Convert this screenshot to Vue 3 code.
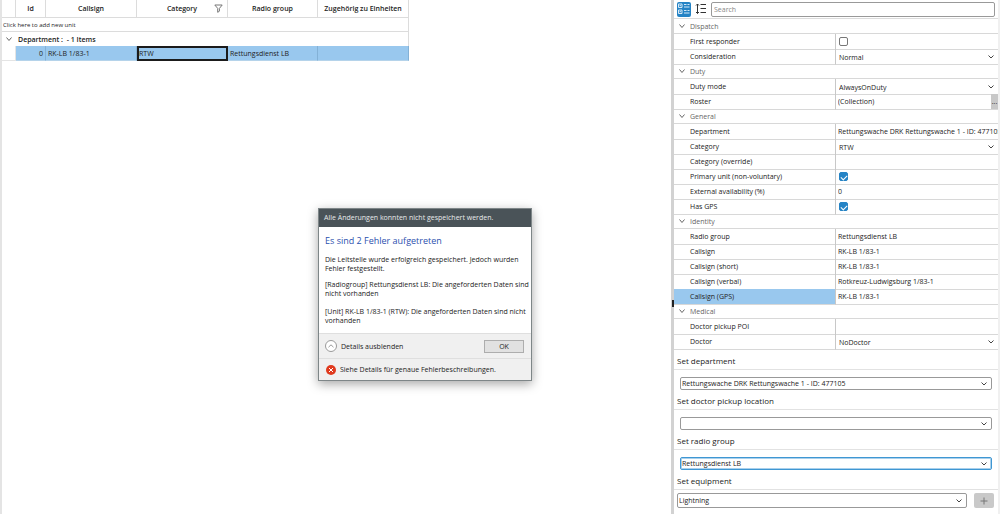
<script setup>
import { ref } from 'vue'

const columns = ['Id', 'Callsign', 'Category', 'Radio group', 'Zugehörig zu Einheiten']

const groups = ref([
  {
    name: 'Dispatch',
    rows: [
      { label: 'First responder', type: 'check', value: false },
      { label: 'Consideration', type: 'select', value: 'Normal' },
    ],
  },
  {
    name: 'Duty',
    rows: [
      { label: 'Duty mode', type: 'select', value: 'AlwaysOnDuty' },
      { label: 'Roster', type: 'collection', value: '(Collection)' },
    ],
  },
  {
    name: 'General',
    rows: [
      { label: 'Department', type: 'text', value: 'Rettungswache DRK Rettungswache 1 - ID: 477105' },
      { label: 'Category', type: 'select', value: 'RTW' },
      { label: 'Category (override)', type: 'text', value: '' },
      { label: 'Primary unit (non-voluntary)', type: 'check', value: true },
      { label: 'External availability (%)', type: 'text', value: '0' },
      { label: 'Has GPS', type: 'check', value: true },
    ],
  },
  {
    name: 'Identity',
    rows: [
      { label: 'Radio group', type: 'text', value: 'Rettungsdienst LB' },
      { label: 'Callsign', type: 'text', value: 'RK-LB 1/83-1' },
      { label: 'Callsign (short)', type: 'text', value: 'RK-LB 1/83-1' },
      { label: 'Callsign (verbal)', type: 'text', value: 'Rotkreuz-Ludwigsburg 1/83-1' },
      { label: 'Callsign (GPS)', type: 'text', value: 'RK-LB 1/83-1', selected: true },
    ],
  },
  {
    name: 'Medical',
    rows: [
      { label: 'Doctor pickup POI', type: 'text', value: '' },
      { label: 'Doctor', type: 'select', value: 'NoDoctor' },
    ],
  },
])

const setters = ref([
  { label: 'Set department', value: 'Rettungswache DRK Rettungswache 1 - ID: 477105' },
  { label: 'Set doctor pickup location', value: '' },
  { label: 'Set radio group', value: 'Rettungsdienst LB', active: true },
])
const equipment = ref('Lightning')
const search = ref('')

const idFor = (prefix, label) => prefix + '-' + label.toLowerCase().replace(/[^a-z]+/g, '-')
</script>

<template>
  <div class="app">
    <main class="units">
      <table class="grid">
        <colgroup>
          <col class="c-indent" /><col class="c-id" /><col class="c-wide" /><col class="c-wide" /><col class="c-mid" /><col class="c-wide" />
        </colgroup>
        <thead>
          <tr>
            <th></th>
            <th v-for="c in columns" :key="c" scope="col">
              <div class="head">
                {{ c }}
                <svg v-if="c === 'Category'" class="funnel" viewBox="0 0 9 9"><path d="M.8 1h7.4L5.4 4.4v2.8L3.7 8.3V4.4z" /></svg>
              </div>
            </th>
          </tr>
        </thead>
        <tbody>
          <tr class="new"><td colspan="6">Click here to add new unit</td></tr>
          <tr class="group">
            <td colspan="6">
              <div class="group-line">
                <svg class="chev" viewBox="0 0 8 8"><path d="M1.5 2.5 4 5.5l2.5-3" /></svg>
                <span>Department :&nbsp; - 1 Items</span>
              </div>
            </td>
          </tr>
          <tr class="unit">
            <td class="blank"></td>
            <td class="num">0</td>
            <td>RK-LB 1/83-1</td>
            <td class="current">RTW</td>
            <td>Rettungsdienst LB</td>
            <td></td>
          </tr>
        </tbody>
      </table>
    </main>

    <div class="splitter"><span class="grip"></span></div>

    <aside class="panel">
      <div class="toolbar">
        <button class="tool on" type="button" aria-label="Categorized">
          <svg viewBox="0 0 14 14">
            <path d="M1.500 2h3.500v3.500h-3.500zM1.500 8h3.500v3.500h-3.500zM2.500 3.700h1.500M2.500 9.700h1.500M7 2.500h2.500M10.500 2.500h2M7 5h5.500M7 8.500h2.500M10.500 8.500h2M7 11h5.500" />
          </svg>
        </button>
        <button class="tool" type="button" aria-label="Alphabetical">
          <svg viewBox="0 0 14 14"><path d="M3.500 2v9.500M2 3.500 3.500 2 5 3.500M2 10l1.500 1.500L5 10M6.500 2.500h5.500M6.500 6.500h5.500M6.500 10.500h5.500" /></svg>
        </button>
        <input v-model="search" class="search" type="text" placeholder="Search" aria-label="Search" />
      </div>

      <div class="props">
        <template v-for="g in groups" :key="g.name">
          <div class="section">
            <svg class="chev" viewBox="0 0 8 8"><path d="M1.500 2.500 4 5.500l2.500-3" /></svg>
            <span>{{ g.name }}</span>
          </div>
          <div v-for="r in g.rows" :key="r.label" class="prop" :class="{ selected: r.selected }">
            <label :for="idFor('prop', r.label)">{{ r.label }}</label>
            <div class="value" :class="r.type">
              <input v-if="r.type === 'check'" :id="idFor('prop', r.label)" v-model="r.value" type="checkbox" />
              <template v-else-if="r.type === 'select'">
                <select :id="idFor('prop', r.label)" v-model="r.value"><option>{{ r.value }}</option></select>
                <svg class="arrow" viewBox="0 0 8 8"><path d="M1.500 2.500 4 5l2.500-2.500" /></svg>
              </template>
              <template v-else>
                <input :id="idFor('prop', r.label)" v-model="r.value" type="text" />
                <button v-if="r.type === 'collection'" class="more" type="button" aria-label="Edit roster">...</button>
              </template>
            </div>
          </div>
        </template>
      </div>

      <div class="setters">
        <div v-for="s in setters" :key="s.label" class="setter">
          <label :for="idFor('set', s.label)">{{ s.label }}</label>
          <div class="combo" :class="{ active: s.active }">
            <select :id="idFor('set', s.label)" v-model="s.value"><option>{{ s.value }}</option></select>
            <svg class="arrow" viewBox="0 0 8 8"><path d="M1.500 2.500 4 5l2.500-2.500" /></svg>
          </div>
        </div>
        <div class="setter">
          <label for="set-equipment">Set equipment</label>
          <div class="equip">
            <div class="combo">
              <select id="set-equipment" v-model="equipment"><option>Lightning</option></select>
              <svg class="arrow" viewBox="0 0 8 8"><path d="M1.500 2.500 4 5l2.500-2.500" /></svg>
            </div>
            <button class="add" type="button" aria-label="Add equipment">
              <svg viewBox="0 0 8 8"><path d="M4 .5v7M.5 4h7" /></svg>
            </button>
          </div>
        </div>
      </div>
    </aside>

    <section class="dialog" role="dialog" aria-labelledby="dialog-title">
      <header id="dialog-title">Alle Änderungen konnten nicht gespeichert werden.</header>
      <div class="message">
        <h1>Es sind 2 Fehler aufgetreten</h1>
        <p>Die Leitstelle wurde erfolgreich gespeichert. Jedoch wurden<br />Fehler festgestellt.</p>
        <p>[Radiogroup] Rettungsdienst LB: Die angeforderten Daten sind<br />nicht vorhanden</p>
        <p class="far">[Unit] RK-LB 1/83-1 (RTW): Die angeforderten Daten sind nicht<br />vorhanden</p>
      </div>
      <div class="actions">
        <button class="details" type="button">
          <svg viewBox="0 0 12 12"><circle cx="6" cy="6" r="5.500" /><path d="M3.500 7.200 6 4.800l2.500 2.400" /></svg>
          Details ausblenden
        </button>
        <button class="ok" type="button">OK</button>
      </div>
      <footer>
        <svg viewBox="0 0 10 10"><circle cx="5" cy="5" r="5" /><path d="m3 3 4 4M7 3 3 7" /></svg>
        Siehe Details für genaue Fehlerbeschreibungen.
      </footer>
    </section>
  </div>
</template>

<style>
body {
  background: #fff;
}
</style>

<style scoped>
.app,
.app * {
  box-sizing: border-box;
}
.app {
  position: relative;
  display: flex;
  min-height: 100vh;
  overflow: hidden;
  font: 7px/14px 'Open Sans', 'Noto Sans', sans-serif;
  color: #222;
}
button,
input,
select {
  font: inherit;
  color: inherit;
  margin: 0;
  padding: 0;
  border: 0;
  background: none;
  border-radius: 0;
  appearance: none;
  outline: none;
}
svg {
  display: block;
  flex: none;
  fill: none;
  stroke: #666;
}

/* unit list */
.units {
  flex: 1;
  min-width: 0;
  padding-left: 2px;
  background: linear-gradient(to right, #e4e4e4 2px, #fff 2px);
}
.grid {
  width: 407px;
  table-layout: fixed;
  border-collapse: separate;
  border-spacing: 0;
}
.c-indent { width: 14px; }
.c-id { width: 30px; }
.c-wide { width: 91px; }
.c-mid { width: 90px; }
.grid th {
  height: 18px;
  padding: 0;
  border-right: 1px solid #dcdcdc;
  border-bottom: 1px solid #dcdcdc;
  font-weight: 600;
}
.head {
  position: relative;
  line-height: 17px;
  white-space: nowrap;
}
.funnel {
  position: absolute;
  right: 4px;
  top: 4px;
  width: 9px;
  height: 9px;
  stroke: #777;
}
.grid td {
  height: 15px;
  padding: 1px 2px 0;
  line-height: 13px;
  white-space: nowrap;
}
.grid .new td {
  height: 14px;
  padding: 1px 1px 0;
  font-size: 6px;
  line-height: 12px;
  border-right: 1px solid #dcdcdc;
  border-bottom: 1px solid #dcdcdc;
}
.grid .group td {
  height: 14px;
  padding-top: 0;
  border-right: 1px solid #dcdcdc;
  font-weight: 600;
}
.group-line {
  display: flex;
  align-items: center;
  gap: 5px;
  padding-left: 1px;
}
.chev {
  width: 8px;
  height: 8px;
}
.unit td {
  background: #99c8ee;
  border-right: 1px solid #83b1d6;
  border-bottom: 1px solid #b5d3ea;
}
.unit td.blank {
  background: #fff;
  border-color: #e4e4e4;
}
.unit .num {
  text-align: right;
}
.unit td.current {
  padding: 0;
  line-height: 11px;
  border: 2px solid #1b1b1b;
}

/* splitter */
.splitter {
  flex: none;
  display: flex;
  align-items: center;
  justify-content: flex-end;
  width: 3px;
  background: #d2d2d2;
}
.grip {
  width: 2px;
  height: 7px;
  margin-top: 93px;
  background: #222;
}

/* property panel */
.panel {
  flex: none;
  width: 326px;
  padding-right: 2px;
  background: linear-gradient(to left, #f0f0f0 2px, #fff 2px);
}
.toolbar {
  display: flex;
  align-items: center;
  gap: 3px;
  height: 19px;
  padding: 0 3px;
  border-bottom: 1px solid #dcdcdc;
}
.tool {
  display: grid;
  place-items: center;
  width: 14px;
  height: 15px;
  border-radius: 2px;
}
.tool svg {
  width: 14px;
  height: 14px;
  stroke: #333;
}
.tool.on {
  background: #2583c5;
}
.tool.on svg {
  stroke: #d5e9f7;
}
.search {
  flex: 1;
  min-width: 0;
  height: 15px;
  padding: 0 2px;
  border: 1px solid #999;
  border-radius: 2px;
}
.search::placeholder {
  color: #888;
}
.section {
  display: flex;
  align-items: center;
  gap: 4px;
  height: 15px;
  padding-left: 4px;
  border-bottom: 1px solid #d8d8d8;
  color: #666;
  line-height: 15px;
}
.prop {
  display: grid;
  grid-template-columns: 1fr 1fr;
  height: 15px;
}
.prop label {
  padding: 1px 0 0 16px;
  border-right: 1px solid #c8c8c8;
  border-bottom: 1px solid #d8d8d8;
  line-height: 14px;
  white-space: nowrap;
}
.prop.selected label {
  background: #99c8ee;
}
.value {
  position: relative;
  display: flex;
  align-items: center;
  min-width: 0;
  border-bottom: 1px solid #d8d8d8;
}
.value input[type='text'] {
  flex: 1;
  min-width: 0;
  height: 14px;
  padding: 1px 0 0 2px;
}
.value select {
  flex: 1;
  min-width: 0;
  height: 14px;
  padding: 1px 0 0 3px;
}
.value input[type='checkbox'] {
  display: grid;
  place-items: center;
  width: 9px;
  height: 9px;
  margin-left: 3px;
  border: 1px solid #777;
  border-radius: 2px;
}
.value input[type='checkbox']:checked {
  background: #2583c5;
  border-color: #2583c5;
}
.value input[type='checkbox']:checked::after {
  content: '';
  width: 5px;
  height: 3px;
  border: solid #fff;
  border-width: 0 0 1px 1px;
  transform: rotate(-45deg);
}
.arrow {
  position: absolute;
  right: 3px;
  top: 50%;
  width: 8px;
  height: 8px;
  margin-top: -4px;
  stroke: #444;
  pointer-events: none;
}
.more {
  align-self: stretch;
  width: 7px;
  background: #c8c8c8;
  line-height: 14px;
}

/* bulk setters */
.setters {
  padding-top: 4px;
}
.setter {
  height: 40px;
}
.setter label {
  display: block;
  height: 17px;
  padding-left: 3px;
  border-bottom: 1px solid #e2e2e2;
  font-size: 8px;
  line-height: 16px;
}
.combo {
  position: relative;
  display: flex;
  height: 13px;
  margin: 7px 6px 0;
  border: 1px solid #999;
  border-radius: 2px;
}
.combo.active {
  border-color: #3f97d3;
  box-shadow: inset 0 0 0 1px #a9d0ec;
}
.combo select {
  flex: 1;
  min-width: 0;
  padding-left: 1px;
  line-height: 11px;
}
.equip {
  display: flex;
  gap: 7px;
  padding: 3px 4px 0 3px;
}
.equip .combo {
  flex: 1;
  height: 15px;
  margin: 0;
}
.add {
  display: grid;
  place-items: center;
  width: 20px;
  height: 15px;
  background: #c9c9c9;
  border-radius: 2px;
}
.add svg {
  width: 8px;
  height: 8px;
  stroke: #777;
}

/* message window */
.dialog {
  position: absolute;
  left: 318px;
  top: 208px;
  width: 214px;
  border: 1px solid #7e8688;
  background: #fff;
  box-shadow: 0 3px 10px rgba(0, 0, 0, 0.35);
  line-height: 9px;
  white-space: nowrap;
}
.dialog header {
  height: 18px;
  padding-left: 5px;
  background: #4a5358;
  color: #e8eaeb;
  line-height: 18px;
}
.message {
  padding: 8px 6px;
}
.message h1 {
  margin: 0 0 8px;
  font-size: 9px;
  line-height: 12px;
  font-weight: 400;
  color: #2b4fae;
}
.message p {
  margin: 0 0 7px;
}
.message p.far {
  margin: 9px 0 0;
}
.actions {
  display: flex;
  align-items: center;
  justify-content: space-between;
  height: 25px;
  padding: 0 7px 0 6px;
  background: #f0f0f0;
  border-top: 1px solid #dfdfdf;
}
.details {
  display: flex;
  align-items: center;
  gap: 4px;
}
.details svg {
  width: 12px;
  height: 12px;
  stroke: #999;
}
.details circle {
  fill: #fff;
}
.ok {
  width: 40px;
  height: 13px;
  background: #e1e1e1;
  border: 1px solid #adadad;
  line-height: 11px;
}
.dialog footer {
  display: flex;
  align-items: center;
  gap: 4px;
  height: 22px;
  padding-left: 7px;
  background: #f0f0f0;
  border-top: 1px solid #dfdfdf;
}
.dialog footer svg {
  width: 10px;
  height: 10px;
  stroke: #fff;
}
.dialog footer circle {
  fill: #e03a1e;
  stroke: none;
}
</style>
